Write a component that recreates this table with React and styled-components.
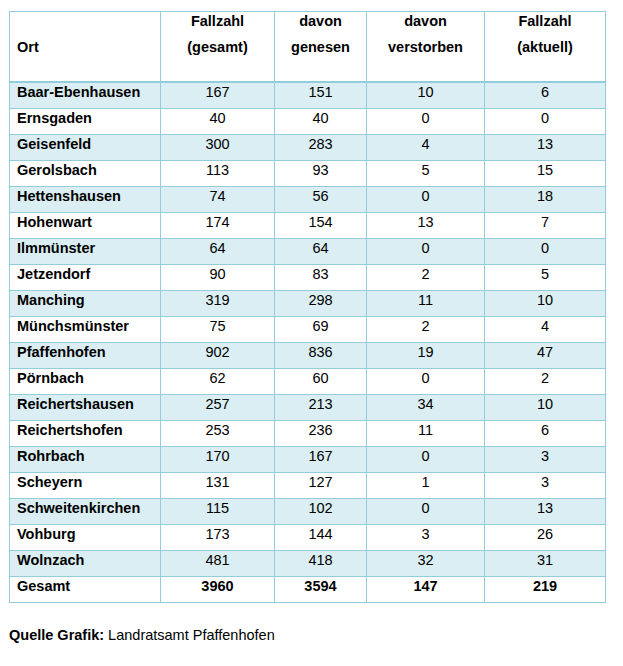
import React from "react";
import styled, { createGlobalStyle } from "styled-components";

const GlobalStyle = createGlobalStyle`
  html, body { margin: 0; padding: 0; background: #fff; }
  body {
    font-family: "Liberation Sans", Arial, sans-serif;
    font-size: 14.5px;
    color: #000;
  }
`;

const BORDER = "#92cddc";
const STRIPE = "#daeef3";

const Page = styled.div`
  padding: 11px 9px;
`;

const Table = styled.table`
  width: 597px;
  table-layout: fixed;
  border-collapse: separate;
  border-spacing: 0;
  border-top: 1px solid ${BORDER};
  border-left: 1px solid ${BORDER};
`;

const HeadCell = styled.th`
  box-sizing: border-box;
  height: 71px;
  padding: ${(p) => (p.$left ? "0 7px" : "1px 4px 0")};
  border-right: 1px solid ${BORDER};
  border-bottom: 2px solid ${BORDER};
  text-align: ${(p) => (p.$left ? "left" : "center")};
  vertical-align: ${(p) => (p.$left ? "middle" : "top")};
  font-weight: 700;
  line-height: 16px;
`;

const HeadLines = styled.div`
  display: flex;
  flex-direction: column;
  align-items: center;
  gap: 10px;
`;

const Row = styled.tr`
  background: ${(p) => (p.$striped ? STRIPE : "#fff")};
`;

const Cell = styled.td`
  box-sizing: border-box;
  height: 26px;
  padding: 1px 7px 0;
  border-right: 1px solid ${BORDER};
  border-bottom: 1px solid ${BORDER};
  text-align: ${(p) => (p.$left ? "left" : "center")};
  vertical-align: top;
  line-height: 16px;
  font-weight: ${(p) => (p.$bold ? 700 : 400)};
  white-space: nowrap;
`;

const Caption = styled.p`
  margin: 24px 0 0;
  line-height: 16px;
`;

const Strong = styled.strong`
  font-weight: 700;
`;

const columns = [151, 114, 92, 118, 121];

const headers = [
  ["Fallzahl", "(gesamt)"],
  ["davon", "genesen"],
  ["davon", "verstorben"],
  ["Fallzahl", "(aktuell)"],
];

const rows = [
  ["Baar-Ebenhausen", 167, 151, 10, 6],
  ["Ernsgaden", 40, 40, 0, 0],
  ["Geisenfeld", 300, 283, 4, 13],
  ["Gerolsbach", 113, 93, 5, 15],
  ["Hettenshausen", 74, 56, 0, 18],
  ["Hohenwart", 174, 154, 13, 7],
  ["Ilmmünster", 64, 64, 0, 0],
  ["Jetzendorf", 90, 83, 2, 5],
  ["Manching", 319, 298, 11, 10],
  ["Münchsmünster", 75, 69, 2, 4],
  ["Pfaffenhofen", 902, 836, 19, 47],
  ["Pörnbach", 62, 60, 0, 2],
  ["Reichertshausen", 257, 213, 34, 10],
  ["Reichertshofen", 253, 236, 11, 6],
  ["Rohrbach", 170, 167, 0, 3],
  ["Scheyern", 131, 127, 1, 3],
  ["Schweitenkirchen", 115, 102, 0, 13],
  ["Vohburg", 173, 144, 3, 26],
  ["Wolnzach", 481, 418, 32, 31],
];

const total = ["Gesamt", 3960, 3594, 147, 219];

export default function App() {
  return (
    <>
      <GlobalStyle />
      <Page>
        <Table>
          <colgroup>
            {columns.map((w, i) => (
              <col key={i} style={{ width: w }} />
            ))}
          </colgroup>
          <thead>
            <tr>
              <HeadCell $left>Ort</HeadCell>
              {headers.map(([a, b], i) => (
                <HeadCell key={i}>
                  <HeadLines>
                    <span>{a}</span>
                    <span>{b}</span>
                  </HeadLines>
                </HeadCell>
              ))}
            </tr>
          </thead>
          <tbody>
            {rows.map((r, i) => (
              <Row key={r[0]} $striped={i % 2 === 0}>
                <Cell $left $bold>
                  {r[0]}
                </Cell>
                {r.slice(1).map((v, j) => (
                  <Cell key={j}>{v}</Cell>
                ))}
              </Row>
            ))}
            <Row>
              <Cell $left $bold>
                {total[0]}
              </Cell>
              {total.slice(1).map((v, j) => (
                <Cell key={j} $bold>
                  {v}
                </Cell>
              ))}
            </Row>
          </tbody>
        </Table>
        <Caption>
          <Strong>Quelle Grafik:</Strong> Landratsamt Pfaffenhofen
        </Caption>
      </Page>
    </>
  );
}
